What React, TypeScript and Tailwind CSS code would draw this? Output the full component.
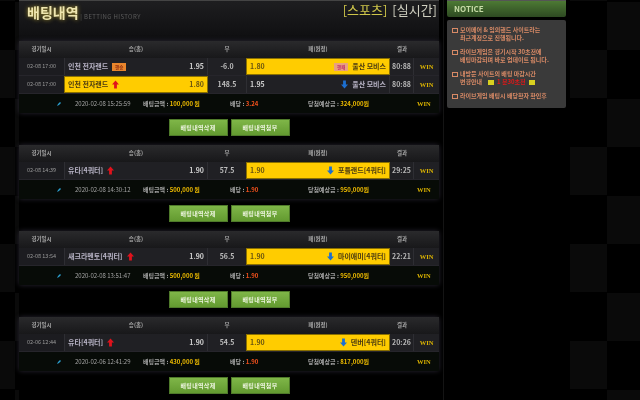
const font = { fontFamily: '"Noto Sans CJK KR", "Liberation Sans", sans-serif' };

function Up() {
  return (
    <svg width="7" height="9" viewBox="0 0 8 9" className="shrink-0">
      <path d="M4 0 L8 4.5 H5.6 V9 H2.4 V4.5 H0 Z" fill="#e0121c" />
    </svg>
  );
}

function Down() {
  return (
    <svg width="7" height="9" viewBox="0 0 8 9" className="shrink-0">
      <path d="M4 9 L8 4.5 H5.6 V0 H2.4 V4.5 H0 Z" fill="#1c6fd0" />
    </svg>
  );
}

type Bet = {
  date: string;
  home: string;
  homeOdds: string;
  homeBadge?: boolean;
  homeUp?: boolean;
  homePicked?: boolean;
  line: string;
  awayOdds: string;
  away: string;
  awayBadge?: boolean;
  awayDown?: boolean;
  awayPicked?: boolean;
  score: string;
};

type Slip = {
  bets: Bet[];
  time: string;
  amount: string;
  odds: string;
  payout: string;
};

const slips: Slip[] = [
  {
    bets: [
      { date: "02-08 17:00", home: "인천 전자랜드", homeOdds: "1.95", homeBadge: true, line: "-6.0", awayOdds: "1.80", away: "울산 모비스", awayBadge: true, awayPicked: true, score: "80:88" },
      { date: "02-08 17:00", home: "인천 전자랜드", homeOdds: "1.80", homeUp: true, homePicked: true, line: "148.5", awayOdds: "1.95", away: "울산 모비스", awayDown: true, score: "80:88" },
    ],
    time: "2020-02-08 15:25:59",
    amount: "100,000",
    odds: "3.24",
    payout: "324,000",
  },
  {
    bets: [{ date: "02-08 14:39", home: "유타[4쿼터]", homeOdds: "1.90", homeUp: true, line: "57.5", awayOdds: "1.90", away: "포틀랜드[4쿼터]", awayDown: true, awayPicked: true, score: "29:25" }],
    time: "2020-02-08 14:30:12",
    amount: "500,000",
    odds: "1.90",
    payout: "950,000",
  },
  {
    bets: [{ date: "02-08 13:54", home: "새크라멘토[4쿼터]", homeOdds: "1.90", homeUp: true, line: "56.5", awayOdds: "1.90", away: "마이애미[4쿼터]", awayDown: true, awayPicked: true, score: "22:21" }],
    time: "2020-02-08 13:51:47",
    amount: "500,000",
    odds: "1.90",
    payout: "950,000",
  },
  {
    bets: [{ date: "02-06 12:44", home: "유타[4쿼터]", homeOdds: "1.90", homeUp: true, line: "54.5", awayOdds: "1.90", away: "덴버[4쿼터]", awayDown: true, awayPicked: true, score: "20:26" }],
    time: "2020-02-06 12:41:29",
    amount: "430,000",
    odds: "1.90",
    payout: "817,000",
  },
];

const cols = "grid grid-cols-[45px_144px_38px_144px_24px_25px]";
const win = "font-['Liberation_Serif'] text-[6.5px] font-bold text-[#dcb400]";

function BetRow({ bet }: { bet: Bet }) {
  return (
    <div className={`${cols} h-[18px] items-stretch border-b border-[#26252b] text-[7px] text-[#b9b9b9]`}>
      <div className="flex items-center justify-center bg-[#1c1c20] text-[5.5px] text-[#9a9a9a]">{bet.date}</div>
      <div className={`flex items-center gap-1 border-x border-[#2e2e33] px-[3px] font-bold ${bet.homePicked ? "border border-[#8a7000] bg-[#ffcc00] text-[#4a3a10]" : "bg-[#202024] text-[#b8b4c6]"}`}>
        <span className="whitespace-nowrap">{bet.home}</span>
        {bet.homeBadge && <span className="h-[8px] w-[14px] bg-[#e8852c] text-center text-[4.5px] leading-[8px] text-[#8a2a10]">핸승</span>}
        {bet.homeUp && <Up />}
        <span className={`ml-auto ${bet.homePicked ? "text-[#6a5510]" : "text-[#cfcfcf]"}`}>{bet.homeOdds}</span>
      </div>
      <div className="flex items-center justify-center bg-[#202024] font-bold text-[#bdbdbd]">{bet.line}</div>
      <div className={`flex items-center gap-1 border-x border-[#2e2e33] px-[3px] font-bold ${bet.awayPicked ? "border border-[#8a7000] bg-[#ffcc00] text-[#4a3a10]" : "bg-[#202024] text-[#b8b4c6]"}`}>
        <span className={bet.awayPicked ? "text-[#6a5510]" : "text-[#cfcfcf]"}>{bet.awayOdds}</span>
        <span className="ml-auto" />
        {bet.awayBadge && <span className="h-[8px] w-[14px] bg-[#e8a080] text-center text-[4.5px] leading-[8px] text-[#c0306a]">핸패</span>}
        {bet.awayDown && <Down />}
        <span className="whitespace-nowrap">{bet.away}</span>
      </div>
      <div className="flex items-center justify-center border-r border-[#2e2e33] bg-[#202024] font-bold text-[#b5b5b5]">{bet.score}</div>
      <div className={`flex items-center justify-center bg-[#202024] ${win}`}>WIN</div>
    </div>
  );
}

function SlipCard({ slip }: { slip: Slip }) {
  return (
    <section>
      <div className="rounded-[2px] shadow-[0_0_5px_#2a2733]">
        <div className={`${cols} h-[17px] items-center bg-gradient-to-b from-[#2a2a2c] to-[#18181a] text-center text-[5.5px] font-bold text-[#a8a8a8]`}>
          <span>경기일시</span>
          <span>승(홈)</span>
          <span>무</span>
          <span>패(원정)</span>
          <span>결과</span>
          <span />
        </div>
        {slip.bets.map((bet, i) => (
          <BetRow key={i} bet={bet} />
        ))}
        <div className="flex h-[19px] items-center bg-[#070b07] text-[6px] text-[#a5a5a5]">
          <svg width="4" height="4" viewBox="0 0 4 4" className="ml-[38px]">
            <path d="M0 4 L1 2 L3 0 L4 1 L2 3 Z" fill="#2b9fd0" />
          </svg>
          <span className="ml-[14px] w-[68px] whitespace-nowrap">{slip.time}</span>
          <span className="w-[87px] whitespace-nowrap font-bold">
            배팅금액 : <span className="text-[#eab800]">{slip.amount}</span> <span className="text-[#eab800]">원</span>
          </span>
          <span className="w-[78px] whitespace-nowrap font-bold">
            배당 : <span className="text-[#f0501c]">{slip.odds}</span>
          </span>
          <span className="w-[109px] whitespace-nowrap font-bold">
            당첨예상금 : <span className="text-[#eab800]">{slip.payout}원</span>
          </span>
          <span className={win}>WIN</span>
        </div>
      </div>
      <div className="mt-[6px] flex justify-center gap-[3px]">
        <button className="h-[17px] w-[59px] border border-[#4f7a2a] bg-gradient-to-b from-[#7fb648] to-[#639a30] text-[6px] font-bold tracking-[0.3px] text-[#eef5e0]">배팅내역삭제</button>
        <button className="h-[17px] w-[59px] border border-[#4f7a2a] bg-gradient-to-b from-[#7fb648] to-[#639a30] text-[6px] font-bold tracking-[0.3px] text-[#eef5e0]">배팅내역첨부</button>
      </div>
    </section>
  );
}

function NoticeLine({ lines, extra }: { lines: string[]; extra?: boolean }) {
  return (
    <div className="flex gap-[2px] text-[6px] leading-[8px] font-bold text-[#d88a66]">
      <span className="mt-[2px] h-[5px] w-[6px] shrink-0 border border-[#d88a66]" />
      <div>
        <div className="whitespace-nowrap">{lines[0]}</div>
        {extra ? (
          <div className="flex items-center whitespace-nowrap">
            <span className="w-[28px]">{lines[1]}</span>
            <span className="h-[5px] w-[6px] bg-[#d8d020]" />
            <span className="mx-[3px] text-[#e01818]">1 분30초전</span>
            <span className="h-[5px] w-[6px] bg-[#d8d020]" />
          </div>
        ) : (
          lines[1] && <div className="whitespace-nowrap">{lines[1]}</div>
        )}
      </div>
    </div>
  );
}

export default function App() {
  return (
    <div
      style={font}
      className="h-[400px] w-[640px] overflow-hidden bg-black bg-[conic-gradient(#0a0a0a_25%,#000_0_50%,#0a0a0a_0_75%,#000_0)] bg-[length:74px_97px] bg-[position:15px_50px] blur-[0.45px]"
    >
      <div className="ml-[19px] flex h-[400px] w-[551px] gap-[3px] bg-black">
        <main className="w-[425px] border-r border-[#141414] pr-[4px]">
          <header className="flex h-[41px] items-start border-t border-[#444] bg-gradient-to-b from-[#1e1e20] to-[#0e0e10] pr-[2px] pl-[8px]">
            <h1 className="mt-[3px] text-[14px] leading-[17px] font-bold text-[#efe6b0] [text-shadow:0_0_4px_#b09a30]">배팅내역</h1>
            <span className="mt-[12px] text-[6px] leading-[8px] tracking-[0.4px] whitespace-nowrap text-[#5c5c5c]">&nbsp;| BETTING HISTORY</span>
            <span className="mt-[1px] ml-auto text-[13px] leading-[16px] text-[#cfc64a]">[스포츠]</span>
            <span className="mt-[1px] ml-[5px] text-[13px] leading-[16px] text-[#cfcfc0]">[실시간]</span>
          </header>
          <div className="flex flex-col gap-[9px]">
            {slips.map((slip) => (
              <SlipCard key={slip.time} slip={slip} />
            ))}
          </div>
        </main>
        <aside className="w-[119px]">
          <div className="flex h-[17px] items-center rounded-b-[2px] border-t border-[#555] bg-gradient-to-b from-[#4d7a34] to-[#2e4a22] pl-[7px] text-[8px] font-bold text-[#c8dca8]">NOTICE</div>
          <div className="mt-[3px] flex h-[88px] flex-col gap-[6px] rounded-[2px] bg-[#3a3a3a] pt-[6px] pl-[5px]">
            <NoticeLine lines={["모이메어 & 임의핸드 사이트라는", "최근계정으로 진행됩니다."]} />
            <NoticeLine lines={["라이브게임은 경기시작 30초전에", "배팅마감되며 바로 업데이트 됩니다."]} />
            <NoticeLine extra lines={["내방문 사이트의 배팅 마감시간", "변경안내"]} />
            <NoticeLine lines={["라이브게임 배팅시 배당확자 확인후"]} />
          </div>
        </aside>
      </div>
    </div>
  );
}
